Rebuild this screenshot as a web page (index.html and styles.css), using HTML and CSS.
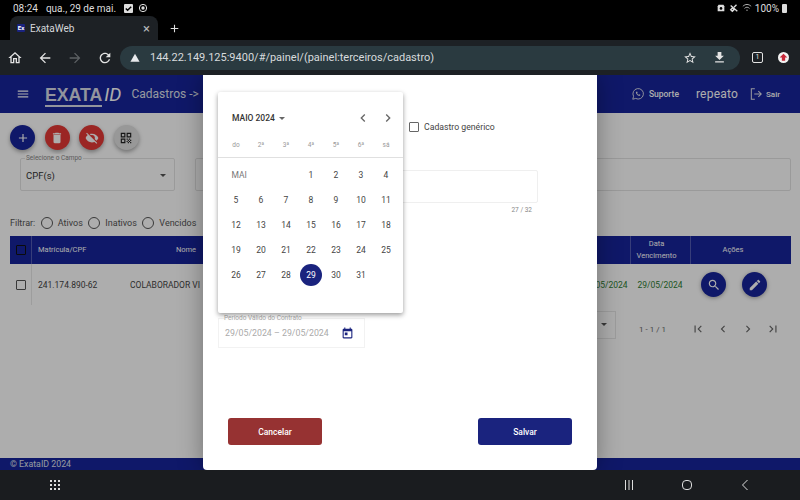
FILE: index.html
```html
<!DOCTYPE html>
<html lang="pt-BR">
<head>
    <meta charset="UTF-8">
    <meta name="viewport" content="width=device-width, initial-scale=1.0">
    <title>ExataWeb</title>
    <link rel="stylesheet" href="styles.css">
</head>
<body>
    <!-- Tablet status bar -->
    <div class="status-bar">
        <span class="status-time">08:24</span>
        <span>qua., 29 de mai.</span>
        <span class="status-check">
            <svg viewBox="0 0 10 10"><path d="M2 5l2 2 4-4" fill="none" stroke="#000" stroke-width="1.6"/></svg>
        </span>
        <svg class="status-icon" viewBox="0 0 12 12"><circle cx="6" cy="6" r="4.4" fill="none" stroke="#ddd" stroke-width="1.2"/><circle cx="6" cy="6" r="2" fill="#ddd"/></svg>
        <span class="status-right">
            <svg class="status-icon" viewBox="0 0 12 12"><path d="M3 2h6l1 2v6H2V4z" fill="#ddd"/><circle cx="6" cy="6.5" r="1.6" fill="#000"/></svg>
            <svg class="status-icon" viewBox="0 0 12 12"><path d="M2 3l8 7M4 6l-2 2 2 2 2-2zM9 2L6 5" fill="none" stroke="#ddd" stroke-width="1.6"/></svg>
            <svg class="status-icon" viewBox="0 0 12 12"><path d="M1 4c3-3 7-3 10 0M3 6.500c2-2 4-2 6 0M5 9c.7-.7 1.300-.7 2 0" fill="none" stroke="#bbb" stroke-width="1.100"/></svg>
            <span>100%</span>
            <span class="status-battery"></span>
        </span>
    </div>

    <!-- Browser chrome -->
    <div class="tab-strip">
        <div class="tab">
            <span class="favicon">Ex</span>
            <span class="tab-title">ExataWeb</span>
            <span class="tab-close">&times;</span>
        </div>
        <svg class="new-tab" viewBox="0 0 24 24"><path d="M19 13h-6v6h-2v-6H5v-2h6V5h2v6h6v2z"/></svg>
    </div>
    <div class="toolbar">
        <svg class="tool-icon" viewBox="0 0 24 24"><path d="M12 5.690l5 4.500V18h-2v-6H9v6H7v-7.810l5-4.500M12 3L2 12h3v8h6v-6h2v6h6v-8h3L12 3z"/></svg>
        <svg class="tool-icon" viewBox="0 0 24 24"><path d="M20 11H7.830l5.590-5.590L12 4l-8 8 8 8 1.410-1.410L7.830 13H20v-2z"/></svg>
        <svg class="tool-icon tool-off" viewBox="0 0 24 24"><path d="M12 4l-1.410 1.410L16.170 11H4v2h12.170l-5.580 5.590L12 20l8-8z"/></svg>
        <svg class="tool-icon" viewBox="0 0 24 24"><path d="M17.650 6.350C16.200 4.900 14.210 4 12 4c-4.420 0-7.990 3.580-7.990 8s3.570 8 7.990 8c3.730 0 6.840-2.550 7.730-6h-2.080c-.82 2.330-3.040 4-5.650 4-3.310 0-6-2.690-6-6s2.690-6 6-6c1.660 0 3.140.69 4.220 1.780L13 11h7V4l-2.350 2.350z"/></svg>
        <div class="omnibox">
            <svg class="warn-icon" viewBox="0 0 24 24"><path d="M1 21h22L12 2z"/></svg>
            <span class="url">144.22.149.125:9400/#/painel/(painel:terceiros/cadastro)</span>
            <svg class="omni-star" viewBox="0 0 24 24"><path d="M22 9.240l-7.190-.62L12 2 9.190 8.630 2 9.240l5.460 4.730L5.820 21 12 17.270 18.180 21l-1.630-7.030L22 9.240zM12 15.400l-3.760 2.270 1-4.280-3.320-2.880 4.380-.38L12 6.100l1.710 4.040 4.380.38-3.320 2.880 1 4.280L12 15.400z"/></svg>
            <svg class="omni-download" viewBox="0 0 24 24"><path d="M19 9h-4V3H9v6H5l7 7 7-7zM5 18v2h14v-2H5z"/></svg>
        </div>
        <span class="tab-count">1</span>
        <span class="update-dot">
            <svg viewBox="0 0 10 10"><path d="M5 1.500L8.500 5H6.500v3h-3V5h-2z"/></svg>
        </span>
    </div>

    <!-- Application behind the dialog -->
    <div class="app">
        <header class="app-header">
            <svg class="menu-icon" viewBox="0 0 24 24"><path d="M3 18h18v-2H3v2zm0-5h18v-2H3v2zm0-7v2h18V6H3z"/></svg>
            <span class="logo"><span class="logo-main">EXATA</span><span class="logo-id">ID</span></span>
            <span class="page-title">Cadastros -&gt;</span>
            <span class="header-right">
                <svg class="header-icon" viewBox="0 0 24 24"><path d="M3 21l1.400-5A9 9 0 1 1 8 19.600z" fill="none" stroke="currentColor" stroke-width="1.600"/><path d="M9 8c-1 1-.8 2.500.8 4.500S13.500 15.800 15 15.200c1-.4 1.200-1.400 1-1.800l-2-1-1 1c-1-.4-2-1.400-2.500-2.500l.9-1-.9-2z" fill="currentColor"/></svg>
                <span class="support">Suporte</span>
                <span class="username">repeato</span>
                <svg class="header-icon" viewBox="0 0 24 24"><path d="M10 3H4v18h6M9 12h12M16 7l5 5-5 5" fill="none" stroke="currentColor" stroke-width="1.800"/></svg>
                <span class="logout">Sair</span>
            </span>
        </header>

        <main class="app-main">
            <div class="action-row">
                <span class="fab fab-blue"><svg viewBox="0 0 24 24"><path d="M19 13h-6v6h-2v-6H5v-2h6V5h2v6h6v2z"/></svg></span>
                <span class="fab fab-red"><svg viewBox="0 0 24 24"><path d="M6 19c0 1.100.9 2 2 2h8c1.100 0 2-.9 2-2V7H6v12zM19 4h-3.500l-1-1h-5l-1 1H5v2h14V4z"/></svg></span>
                <span class="fab fab-red"><svg viewBox="0 0 24 24"><path d="M12 7c2.760 0 5 2.240 5 5 0 .65-.13 1.260-.36 1.830l2.920 2.920c1.510-1.260 2.700-2.890 3.430-4.750-1.730-4.390-6-7.500-11-7.500-1.400 0-2.740.25-3.980.7l2.160 2.160C10.740 7.130 11.350 7 12 7zM2 4.270l2.280 2.280.46.46C3.080 8.300 1.780 10.020 1 12c1.730 4.390 6 7.500 11 7.500 1.550 0 3.030-.3 4.380-.84l.42.42L19.730 22 21 20.730 3.270 3 2 4.270z"/></svg></span>
                <span class="fab fab-grey"><svg viewBox="0 0 24 24"><path d="M3 11h8V3H3v8zm2-6h4v4H5V5zM3 21h8v-8H3v8zm2-6h4v4H5v-4zM13 3v8h8V3h-8zm6 6h-4V5h4v4zM19 19h2v2h-2zM13 13h2v2h-2zM15 15h2v2h-2zM13 17h2v2h-2zM15 19h2v2h-2zM17 17h2v2h-2zM17 13h2v2h-2zM19 15h2v2h-2z"/></svg></span>
            </div>

            <div class="search-row">
                <div class="field field-select">
                    <span class="field-label">Selecione o Campo</span>
                    <span class="field-value">CPF(s)</span>
                    <span class="arrow"></span>
                </div>
                <div class="field field-wide"></div>
            </div>

            <div class="filter-row">
                <span>Filtrar:</span>
                <span class="radio"></span><span>Ativos</span>
                <span class="radio"></span><span>Inativos</span>
                <span class="radio"></span><span>Vencidos</span>
            </div>

            <div class="table">
                <div class="table-head">
                    <span class="cell"><span class="check check-head"></span></span>
                    <span class="cell cell-line cell-id">Matrícula/CPF</span>
                    <span class="cell">Nome</span>
                    <span class="cell"></span>
                    <span class="cell"></span>
                    <span class="cell cell-line cell-due">Data<br>Vencimento</span>
                    <span class="cell cell-line cell-acts">Ações</span>
                </div>
                <div class="table-row">
                    <span class="cell"><span class="check"></span></span>
                    <span class="cell cell-line cell-id">241.174.890-62</span>
                    <span class="cell cell-name">COLABORADOR VI</span>
                    <span class="cell"></span>
                    <span class="cell cell-date">29/05/2024</span>
                    <span class="cell cell-date">29/05/2024</span>
                    <span class="cell cell-actions">
                        <span class="round-btn"><svg viewBox="0 0 24 24"><path d="M15.500 14h-.79l-.28-.27C15.410 12.590 16 11.110 16 9.500 16 5.910 13.090 3 9.500 3S3 5.910 3 9.500 5.910 16 9.500 16c1.610 0 3.090-.59 4.230-1.570l.27.28v.79l5 4.990L20.490 19l-4.990-5zm-6 0C7.010 14 5 11.990 5 9.500S7.010 5 9.500 5 14 7.010 14 9.500 11.990 14 9.500 14z"/></svg></span>
                        <span class="round-btn"><svg viewBox="0 0 24 24"><path d="M3 17.250V21h3.750L17.810 9.940l-3.750-3.750L3 17.250zM20.710 7.040c.39-.39.39-1.020 0-1.410l-2.340-2.340c-.39-.39-1.020-.39-1.410 0l-1.830 1.830 3.750 3.750 1.830-1.830z"/></svg></span>
                    </span>
                </div>
            </div>

            <div class="pager">
                <span class="pager-size"><span class="arrow"></span></span>
                <span class="pager-range">1 - 1 / 1</span>
                <svg viewBox="0 0 24 24"><path d="M18.410 16.590L13.820 12l4.590-4.590L17 6l-6 6 6 6zM6 6h2v12H6z"/></svg>
                <svg viewBox="0 0 24 24"><path d="M15.410 7.410L14 6l-6 6 6 6 1.410-1.410L10.830 12z"/></svg>
                <svg viewBox="0 0 24 24"><path d="M10 6L8.590 7.410 13.170 12l-4.580 4.590L10 18l6-6z"/></svg>
                <svg viewBox="0 0 24 24"><path d="M5.590 7.410L10.180 12l-4.590 4.590L7 18l6-6-6-6zM16 6h2v12h-2z"/></svg>
            </div>
        </main>

        <footer class="app-footer">© ExataID 2024</footer>

        <div class="backdrop"></div>

        <!-- Dialog -->
        <div class="dialog">
            <label class="generic-row">
                <span class="check check-dialog"></span>
                <span>Cadastro genérico</span>
            </label>
            <div class="dialog-input"></div>
            <div class="counter">27 / 32</div>
            <div class="date-field">
                <span class="date-label">Período Válido do Contrato</span>
                <span class="date-value">29/05/2024 – 29/05/2024</span>
                <svg viewBox="0 0 24 24"><path d="M19 3h-1V1h-2v2H8V1H6v2H5c-1.110 0-1.990.9-1.990 2L3 19c0 1.100.89 2 2 2h14c1.100 0 2-.9 2-2V5c0-1.100-.9-2-2-2zm0 16H5V8h14v11zM7 10h5v5H7z"/></svg>
            </div>
            <div class="dialog-buttons">
                <button class="btn btn-cancel">Cancelar</button>
                <button class="btn btn-save">Salvar</button>
            </div>
        </div>

        <!-- Date picker opened over the dialog -->
        <div class="picker">
            <div class="picker-head">
                <span class="picker-month">MAIO 2024</span>
                <span class="picker-caret"></span>
                <svg class="picker-nav" viewBox="0 0 24 24"><path d="M15.410 7.410L14 6l-6 6 6 6 1.410-1.410L10.830 12z"/></svg>
                <svg class="picker-nav" viewBox="0 0 24 24"><path d="M10 6L8.590 7.410 13.170 12l-4.580 4.590L10 18l6-6z"/></svg>
            </div>
            <div class="picker-week">
                <span>do</span><span>2ª</span><span>3ª</span><span>4ª</span><span>5ª</span><span>6ª</span><span>sá</span>
            </div>
            <div class="picker-days">
                <span class="picker-label">MAI</span>
                <span>1</span><span>2</span><span>3</span><span>4</span>
                <span>5</span><span>6</span><span>7</span><span>8</span><span>9</span><span>10</span><span>11</span>
                <span>12</span><span>13</span><span>14</span><span>15</span><span>16</span><span>17</span><span>18</span>
                <span>19</span><span>20</span><span>21</span><span>22</span><span>23</span><span>24</span><span>25</span>
                <span>26</span><span>27</span><span>28</span><span class="picker-today">29</span><span>30</span><span>31</span>
            </div>
        </div>
    </div>

    <!-- Android navigation bar -->
    <div class="nav-bar">
        <svg class="nav-apps" viewBox="0 0 12 12"><path d="M1 1h2v2H1zM5 1h2v2H5zM9 1h2v2H9zM1 5h2v2H1zM5 5h2v2H5zM9 5h2v2H9zM1 9h2v2H1zM5 9h2v2H5zM9 9h2v2H9z"/></svg>
        <span class="nav-right">
            <svg viewBox="0 0 12 12"><path d="M2.500 1v10M6 1v10M9.500 1v10" fill="none" stroke="#ddd" stroke-width="1"/></svg>
            <svg viewBox="0 0 12 12"><rect x="1.500" y="1.500" width="9" height="9" rx="3.500" fill="none" stroke="#ddd" stroke-width="1"/></svg>
            <svg viewBox="0 0 12 12"><path d="M8.500 1L3.500 6l5 5" fill="none" stroke="#ddd" stroke-width="1"/></svg>
        </span>
    </div>
</body>
</html>
```

FILE: styles.css
```css
* {
    box-sizing: border-box;
}
html, body {
    margin: 0;
    height: 500px;
    overflow: hidden;
}
body {
    display: flex;
    flex-direction: column;
    font-family: Roboto, "Liberation Sans", sans-serif;
    background: #000;
}

/* status bar */
.status-bar {
    height: 16px;
    padding: 0 13px;
    display: flex;
    align-items: center;
    gap: 5px;
    color: #ddd;
    font-size: 10px;
    background: #000;
}
.status-time {
    margin-right: 3px;
}
.status-check {
    width: 9px;
    height: 9px;
    margin-left: 3px;
    background: #ddd;
    border-radius: 1px;
    display: flex;
}
.status-icon {
    width: 10px;
    height: 10px;
}
.status-right {
    margin-left: auto;
    display: flex;
    align-items: center;
    gap: 3px;
}
.status-battery {
    width: 5px;
    height: 9px;
    background: #ddd;
    border-radius: 1px;
}

/* browser chrome */
.tab-strip {
    height: 24px;
    padding-left: 10px;
    display: flex;
    align-items: center;
    background: #000;
}
.tab {
    width: 148px;
    height: 24px;
    padding: 0 8px 0 7px;
    display: flex;
    align-items: center;
    background: #1d2125;
    border-radius: 8px 8px 0 0;
    color: #d5d7da;
    font-size: 10px;
}
.favicon {
    width: 8px;
    height: 8px;
    margin-right: 5px;
    background: #1a237e;
    color: #fff;
    border-radius: 1px;
    font-size: 6px;
    font-weight: 700;
    line-height: 8px;
    text-align: center;
}
.tab-close {
    margin-left: auto;
    font-size: 13px;
    color: #b5b8bb;
}
.new-tab {
    width: 13px;
    height: 13px;
    margin-left: 10px;
    fill: #ddd;
}
.toolbar {
    height: 35px;
    padding: 0 10px 0 7px;
    display: flex;
    align-items: center;
    background: #1d2125;
}
.tool-icon {
    width: 16px;
    height: 16px;
    margin-right: 14px;
    flex-shrink: 0;
    fill: #e3e3e3;
}
.tool-off {
    fill: #5c6063;
}
.toolbar .tool-icon:nth-child(4) {
    margin-right: 7px;
}
.omnibox {
    width: 620px;
    height: 24px;
    flex-shrink: 0;
    padding: 0 13px 0 8px;
    display: flex;
    align-items: center;
    background: #2a3a40;
    border-radius: 12px;
}
.warn-icon {
    width: 10px;
    height: 10px;
    fill: #e8eaed;
    margin-left: 2px;
}
.url {
    margin-left: 10px;
    color: #d7dbdd;
    font-size: 11px;
}
.omni-star {
    width: 14px;
    height: 14px;
    margin-left: auto;
    fill: #e3e3e3;
}
.omni-download {
    width: 15px;
    height: 15px;
    margin-left: 15px;
    fill: #e3e3e3;
}
.tab-count {
    width: 11px;
    height: 11px;
    margin-left: 12px;
    border: 1px solid #e3e3e3;
    border-radius: 2px;
    color: #e3e3e3;
    font-size: 7px;
    line-height: 9px;
    text-align: center;
}
.update-dot {
    width: 11px;
    height: 11px;
    margin-left: 15px;
    background: #f3f3f3;
    border-radius: 50%;
    display: flex;
}
.update-dot svg {
    fill: #c62839;
}

/* application */
.app {
    position: relative;
    height: 395px;
    display: flex;
    flex-direction: column;
    background: #fff;
    overflow: hidden;
    color: #333;
}
.app-header {
    height: 38px;
    flex-shrink: 0;
    padding: 0 20px 0 16px;
    display: flex;
    align-items: center;
    background: #17249b;
    color: #fff;
}
.menu-icon {
    width: 14px;
    height: 14px;
    fill: #fff;
}
.logo {
    margin: 2px 0 0 15px;
    font-size: 17.7px;
    line-height: 18px;
}
.logo-main {
    font-family: "Liberation Sans", sans-serif;
    font-weight: 700;
    color: #d8dae8;
    border-bottom: 2px solid #d8dae8;
}
.logo-id {
    margin-left: 2px;
    font-size: 19px;
    font-style: italic;
    color: #fff;
}
.page-title {
    margin-left: 10px;
    font-size: 12px;
    color: #dfe0ea;
}
.header-right {
    margin-left: auto;
    display: flex;
    align-items: center;
}
.header-icon {
    width: 14px;
    height: 14px;
    color: #dfe0ea;
}
.support {
    margin-left: 4px;
    font-size: 8.5px;
    font-weight: 500;
}
.username {
    margin: 0 11px 0 17px;
    font-size: 12px;
    letter-spacing: .2px;
}
.logout {
    margin-left: 3px;
    font-size: 8px;
    font-weight: 500;
}
.app-main {
    flex: 1;
    padding: 12px 9px 0 10px;
    font-size: 9px;
}
.action-row {
    display: flex;
    gap: 9.5px;
}
.fab {
    width: 25px;
    height: 25px;
    border-radius: 50%;
    display: flex;
    align-items: center;
    justify-content: center;
    box-shadow: 0 2px 4px rgba(0,0,0,.35);
}
.fab svg {
    width: 14px;
    height: 14px;
    fill: #fff;
}
.fab-blue {
    background: #17249b;
}
.fab-red {
    background: #e53935;
}
.fab-grey {
    background: #e0e0e0;
}
.fab-grey svg {
    fill: #222;
}
.search-row {
    margin: 8px 0 0 10px;
    display: flex;
    gap: 20px;
}
.field {
    position: relative;
    height: 33px;
    border: 1px solid #e3e3e3;
    border-radius: 2px;
}
.field-select {
    width: 155px;
    padding: 11px 5px;
    font-size: 9.5px;
}
.field-wide {
    flex: 1;
}
.field-label {
    position: absolute;
    top: -5px;
    left: 4px;
    padding: 0 1px;
    background: #fff;
    color: #888;
    font-size: 6.5px;
}
.arrow {
    position: absolute;
    right: 8px;
    top: 15px;
    border: 3px solid transparent;
    border-top-color: #555;
}
.filter-row {
    margin-top: 25px;
    height: 14px;
    display: flex;
    align-items: center;
    gap: 5px;
    font-size: 9px;
    color: #555;
}
.radio {
    width: 12px;
    height: 12px;
    margin-left: .5px;
    border: 1px solid #555;
    border-radius: 50%;
}
.table {
    margin-top: 6px;
}
.table-head, .table-row {
    display: grid;
    grid-template-columns: 21px 72px 166px 1fr 50px 60px 101px;
}
.table-head {
    height: 28px;
    background: #17249b;
    color: #fff;
    font-size: 7.5px;
}
.table-row {
    height: 41px;
    color: #444;
    font-size: 8.5px;
}
.cell {
    display: flex;
    align-items: center;
    justify-content: center;
    text-align: center;
    line-height: 12px;
}
.cell-line {
    border-left: 1px solid rgba(255,255,255,.25);
}
.table-row .cell-line {
    border-left-color: #e8e8e8;
}
.cell-id {
    justify-content: flex-start;
    padding-left: 6px;
    white-space: nowrap;
}
.cell-due {
    padding-right: 8px;
}
.cell-acts {
    padding-right: 16px;
}
.cell-name {
    justify-content: flex-start;
    padding-left: 27px;
    white-space: nowrap;
}
.cell-date {
    color: #2e7d32;
}
.cell-actions {
    gap: 16px;
    padding-right: 13px;
}
.check {
    width: 10px;
    height: 10px;
    border: 1.500px solid #555;
    border-radius: 1px;
}
.check-head {
    border-color: #111;
}
.round-btn {
    width: 25px;
    height: 25px;
    background: #17249b;
    border-radius: 50%;
    display: flex;
    align-items: center;
    justify-content: center;
    box-shadow: 0 1px 4px rgba(0,0,0,.35);
}
.round-btn svg {
    width: 14px;
    height: 14px;
    fill: #fff;
}
.pager {
    margin-top: 9px;
    height: 30px;
    display: flex;
    align-items: center;
    justify-content: flex-end;
    padding-right: 11px;
    gap: 11px;
    color: #666;
    font-size: 8px;
}
.pager svg {
    width: 14px;
    height: 14px;
    fill: #666;
}
.pager-size {
    position: relative;
    width: 40px;
    height: 28px;
    margin: 0 12px 8px 0;
    border: 1px solid #e8e8e8;
}
.pager-size .arrow {
    top: 11px;
}
.pager-range {
    margin-right: 14px;
}
.app-footer {
    height: 12px;
    flex-shrink: 0;
    padding-left: 10px;
    background: #17249b;
    color: #dfe0ea;
    font-size: 8.8px;
    line-height: 12px;
}

/* dialog over the page */
.backdrop {
    position: absolute;
    inset: 0;
    background: rgba(0,0,0,.32);
}
.dialog {
    position: absolute;
    top: 0;
    left: 203px;
    width: 394px;
    height: 395px;
    padding: 0 15px;
    display: flex;
    flex-direction: column;
    background: #fff;
    border-radius: 0 0 4px 4px;
    box-shadow: 0 0 24px rgba(0,0,0,.35);
    color: #444;
}
.generic-row {
    margin: 46px 0 0 191px;
    height: 12px;
    display: flex;
    align-items: center;
    gap: 5px;
    font-size: 8.7px;
}
.check-dialog {
    border-color: #666;
}
.dialog-input {
    width: 320px;
    height: 33px;
    margin-top: 37px;
    border: 1px solid #efefef;
    border-radius: 2px;
}
.counter {
    width: 314px;
    margin-top: 3px;
    color: #888;
    font-size: 6.5px;
    text-align: right;
}
.date-field {
    position: relative;
    width: 147px;
    height: 30px;
    margin-top: 104px;
    padding: 0 10px 0 6px;
    display: flex;
    align-items: center;
    justify-content: space-between;
    border: 1px solid #f2f2f2;
    color: #aaa;
    font-size: 8.8px;
}
.date-label {
    position: absolute;
    top: -5px;
    left: 5px;
    background: #fff;
    font-size: 6.5px;
    white-space: nowrap;
}
.date-field svg {
    width: 13px;
    height: 13px;
    fill: #1a237e;
}
.dialog-buttons {
    margin-top: 70px;
    padding: 0 10px;
    display: flex;
    justify-content: space-between;
}
.btn {
    width: 94px;
    height: 27px;
    border: none;
    border-radius: 3px;
    color: #fff;
    font-family: Roboto, "Liberation Sans", sans-serif;
    font-size: 8.500px;
    font-weight: 500;
}
.btn-cancel {
    background: #963232;
}
.btn-save {
    background: #1a237e;
}

/* date picker */
.picker {
    position: absolute;
    top: 17px;
    left: 218px;
    width: 185px;
    height: 221px;
    background: #fff;
    border-radius: 2px;
    box-shadow: 0 2px 5px rgba(0,0,0,.4);
    color: #444;
}
.picker-head {
    height: 48px;
    padding: 4px 7px 0 14px;
    display: flex;
    align-items: center;
}
.picker-month {
    font-size: 8.500px;
    font-weight: 500;
    color: #333;
}
.picker-caret {
    margin: 3px 0 0 4px;
    border: 3px solid transparent;
    border-top-color: #666;
}
.picker-nav {
    width: 16px;
    height: 16px;
    margin-left: 9px;
    fill: #666;
}
.picker-caret + .picker-nav {
    margin-left: auto;
}
.picker-week {
    height: 11px;
    display: grid;
    grid-template-columns: repeat(7, 25px);
    padding-left: 5.500px;
    color: #999;
    font-size: 6.5px;
    text-align: center;
    line-height: 11px;
}
.picker-days {
    margin-top: 6px;
    padding: 4px 0 0 5.500px;
    display: grid;
    grid-template-columns: repeat(7, 25px);
    grid-auto-rows: 25px;
    border-top: 1px solid #e0e0e0;
    font-size: 8.500px;
}
.picker-days span {
    display: flex;
    align-items: center;
    justify-content: center;
}
.picker-days .picker-label {
    grid-column: span 3;
    justify-content: flex-start;
    padding-left: 8px;
    color: #777;
}
.picker-days .picker-today {
    width: 22px;
    height: 22px;
    margin: auto;
    background: #1a237e;
    border-radius: 50%;
    color: #fff;
}

/* android nav bar */
.nav-bar {
    height: 30px;
    padding: 0 49px;
    display: flex;
    align-items: center;
    background: #1a1c1f;
}
.nav-apps {
    width: 12px;
    height: 12px;
    fill: #ddd;
}
.nav-right {
    margin-left: auto;
    display: flex;
    gap: 46px;
}
.nav-right svg {
    width: 12px;
    height: 12px;
}
```
